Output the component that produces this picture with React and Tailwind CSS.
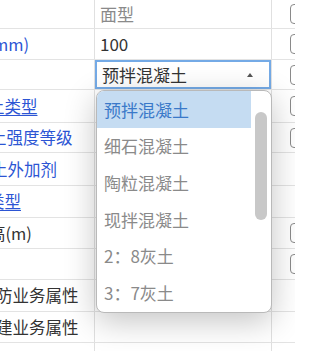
import React from 'react';

const rows = [
  { h: 29, label: '', value: '面型', valueColor: 'text-[#8a8a8a]', check: true },
  { h: 31, label: 'mm)', ml: -7, blue: true, value: '100', valueColor: 'text-[#333]', check: true },
  { h: 30, label: '', dropdown: true, check: true },
  { h: 33, label: '土类型', ml: -12, blue: true, underline: true, check: true },
  { h: 30, label: '土强度等级', ml: -10, blue: true, check: true },
  { h: 33, label: '土外加剂', ml: -9, blue: true },
  { h: 32, label: '类型', ml: -12, blue: true, underline: true },
  { h: 31, label: '高(m)', ml: -11, check: true },
  { h: 31, label: '', check: true },
  { h: 32, label: '防业务属性', ml: -4 },
  { h: 31, label: '建业务属性', ml: -4 },
  { h: 31, label: '' },
];

const options = ['预拌混凝土', '细石混凝土', '陶粒混凝土', '现拌混凝土', '2：8灰土', '3：7灰土', '1：9灰土'];

function Row({ row }) {
  return (
    <div className="flex border-b border-[#e3e3e3]" style={{ height: row.h }}>
      {/* label */}
      <div className="w-[95px] shrink-0 overflow-hidden flex items-center border-r border-[#e0e0e0]">
        {row.label && (
          <span
            className={`whitespace-nowrap text-[16.5px] ${row.blue ? 'text-[#2c55d4]' : 'text-[#333]'} ${row.underline ? 'underline underline-offset-2' : ''}`}
            style={{ marginLeft: row.ml }}
          >
            {row.label}
          </span>
        )}
      </div>

      {/* value */}
      <div className="w-[177px] shrink-0 border-r border-[#e0e0e0] flex items-center">
        {row.dropdown ? (
          <div className="w-full h-full border-2 border-[#74aae6] flex items-center justify-between pl-[5px] pr-[16px]">
            <span className="text-[17px] text-[#333] whitespace-nowrap">预拌混凝土</span>
            <span className="w-0 h-0 border-l-[3.5px] border-r-[3.5px] border-b-[4px] border-l-transparent border-r-transparent border-b-[#555]" />
          </div>
        ) : (
          <span className={`pl-[5px] text-[17px] ${row.valueColor || ''}`}>{row.value}</span>
        )}
      </div>

      {/* checkbox */}
      <div className="flex-1 flex items-center">
        {row.check && <div className="ml-[18px] w-[18px] h-[20px] shrink-0 border border-[#8a8a8a] rounded-[4px] bg-white" />}
      </div>
    </div>
  );
}

export default function App() {
  return (
    <div
      className="relative w-[295px] h-[351px] overflow-hidden bg-white"
      style={{ fontFamily: '"Noto Sans CJK SC", "Noto Sans", sans-serif' }}
    >
      <div className="flex flex-col">
        {rows.map((row, i) => (
          <Row key={i} row={row} />
        ))}
      </div>

      {/* dropdown list */}
      <div className="absolute left-[96px] top-[90px] w-[176px] h-[223px] bg-white border border-[#b9b9b9] rounded-[8px] overflow-hidden shadow-[0_8px_32px_rgba(0,0,0,0.24)]">
        <div className="flex">
          <div className="w-[154px] flex flex-col">
            {options.map((opt, i) => (
              <div
                key={opt}
                className={`h-[36.7px] shrink-0 flex items-center pl-[7px] text-[17px] whitespace-nowrap ${
                  i === 0 ? 'bg-[#c5dcf2] text-[#3a79c9]' : 'text-[#8a8a8a]'
                }`}
              >
                {opt}
              </div>
            ))}
          </div>
          <div className="flex-1 pt-[21px] flex justify-center">
            <div className="w-[12px] h-[108px] rounded-full bg-[#c8c8c8]" />
          </div>
        </div>
      </div>
    </div>
  );
}
